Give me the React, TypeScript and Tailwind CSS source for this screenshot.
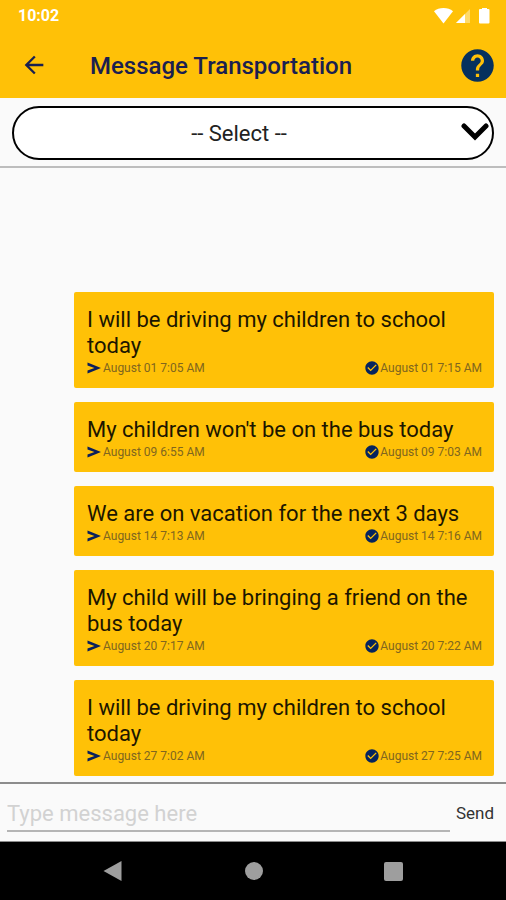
import React, { useState } from 'react';
import { MdArrowBack, MdCheckCircle, MdHelp } from 'react-icons/md';

const messages = [
  { text: 'I will be driving my children to school today', sent: 'August 01 7:05 AM', read: 'August 01 7:15 AM' },
  { text: "My children won't be on the bus today", sent: 'August 09 6:55 AM', read: 'August 09 7:03 AM' },
  { text: 'We are on vacation for the next 3 days', sent: 'August 14 7:13 AM', read: 'August 14 7:16 AM' },
  { text: 'My child will be bringing a friend on the bus today', sent: 'August 20 7:17 AM', read: 'August 20 7:22 AM' },
  { text: 'I will be driving my children to school today', sent: 'August 27 7:02 AM', read: 'August 27 7:25 AM' },
];

const SendIcon = () => (
  <svg viewBox="0 0 14 12" className="w-3.5 h-3 mr-0.5 text-[#0b1f5c]" fill="currentColor">
    <path d="M0.500 0.500 14 6 0.500 11.500V8.500L7.500 6 0.500 3.500Z" />
  </svg>
);

const StatusBar = () => (
  <div className="flex items-center justify-between h-8 pl-[18px] pr-4 text-white">
    <span className="text-base font-bold">10:02</span>
    <svg viewBox="0 0 56 18" className="w-14 h-[18px]" fill="currentColor">
      <path d="M0 4.200C2.500 2.200 5.800 1 9.500 1s7 1.200 9.500 3.200L9.500 16.500Z" />
      <path d="M36 2v14H22Z" opacity="0.4" />
      <path d="M31 7v9h-9Z" />
      <path d="M47 2h1V1h5v1h1.500q1 0 1 1v12.500q0 1-1 1H46q-1 0-1-1V3q0-1 1-1Z" />
    </svg>
  </div>
);

const MessageCard = ({ text, sent, read }: { text: string; sent: string; read: string }) => (
  <li className="bg-[#ffc107] rounded-xs pl-[13px] pr-3 pt-[15px] pb-3">
    <p className="mb-px text-[22px] leading-[26px] text-[#1c1600]">{text}</p>
    <div className="flex justify-between h-4 text-xs leading-4 text-[#80661f]">
      <span className="flex items-center">
        <SendIcon />
        {sent}
      </span>
      <span className="flex items-center">
        <MdCheckCircle className="w-4 h-4 text-[#06245e]" />
        {read}
      </span>
    </div>
  </li>
);

const App = () => {
  const [message, setMessage] = useState('');
  const [template, setTemplate] = useState('');

  const handleSubmit = (e: React.FormEvent) => {
    e.preventDefault();
    setMessage('');
  };

  return (
    <div className="flex flex-col min-h-screen bg-[#fafafa] font-[Roboto,sans-serif]">
      <header className="bg-[#ffc107]">
        <StatusBar />
        <div className="flex items-center h-[66px] pl-5 pr-[9px] text-[#06315e]">
          <button type="button" aria-label="Back">
            <MdArrowBack className="w-7 h-7 text-[#1a2050]" />
          </button>
          <h1 className="flex-1 pl-[42px] pt-0.5 text-2xl font-medium text-[#1a2050]">Message Transportation</h1>
          <button type="button" aria-label="Help">
            <MdHelp className="w-[39px] h-[39px]" />
          </button>
        </div>
      </header>

      <div className="relative px-3 pt-2 pb-1.5 border-b-2 border-[#bdbdbd]">
        <select
          aria-label="Message template"
          value={template}
          onChange={(e) => setTemplate(e.target.value)}
          className="appearance-none w-full h-[54px] pl-3 pr-10 rounded-full border-2 border-black bg-white text-[22px] text-[#222] [text-align-last:center]"
        >
          <option value="">-- Select --</option>
          {messages.slice(0, 4).map((m) => (
            <option key={m.text}>{m.text}</option>
          ))}
        </select>
        <svg
          viewBox="0 0 28 18"
          className="absolute right-[17px] top-[25px] w-7 h-[18px] pointer-events-none"
          fill="none"
          stroke="black"
          strokeWidth="5"
          strokeLinecap="round"
        >
          <path d="M3 3 14 14 25 3" />
        </svg>
      </div>

      <main className="flex flex-col flex-1 justify-end pl-[74px] pr-3 pb-1.5">
        <ul className="space-y-3.5">
          {messages.map((m) => (
            <MessageCard key={m.sent} {...m} />
          ))}
        </ul>
      </main>

      <form onSubmit={handleSubmit} className="flex items-center h-[60px] pl-[7px] pr-3 border-t-2 border-b border-[#8c8c8c]">
        <input
          type="text"
          aria-label="Message"
          placeholder="Type message here"
          value={message}
          onChange={(e) => setMessage(e.target.value)}
          className="flex-1 min-w-0 h-[38px] pt-1 border-b-2 border-[#b5b5b5] text-[22px] text-[#222] placeholder:text-[#d2d2d2] focus:outline-none"
        />
        <button type="submit" className="pl-1.5 pt-0.5 text-[17px] text-[#333]">
          Send
        </button>
      </form>

      <nav className="flex items-center justify-between h-[58px] px-[103px] bg-black text-[#9e9e9e]">
        <button type="button" aria-label="Back">
          <svg viewBox="0 0 20 20" className="w-5 h-5" fill="currentColor">
            <path d="M18.500 0v20L0.500 10Z" />
          </svg>
        </button>
        <button type="button" aria-label="Home" className="w-[18px] h-[18px] rounded-full bg-[#9e9e9e]" />
        <button type="button" aria-label="Recent apps" className="w-[19px] h-[19px] rounded-xs bg-[#9e9e9e]" />
      </nav>
    </div>
  );
};

export default App;
